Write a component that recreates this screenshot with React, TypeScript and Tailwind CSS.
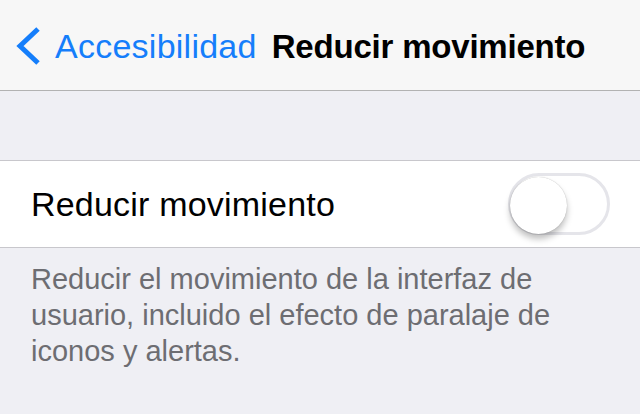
import React from "react";

export default function App() {
  const font = { fontFamily: '"Liberation Sans", Arial, sans-serif' };
  return (
    <div className="w-[640px] h-[414px] bg-[#efeff4] overflow-hidden" style={font}>
      <div className="h-[91px] bg-[#f7f7f7] border-b border-[#b2b2b2] flex items-center relative">
        <div className="flex items-center pl-[15px] pt-[2px]">
          <svg width="27" height="40" viewBox="0 0 27 40" className="mr-[13px]">
            <path d="M23 3 L5 20 L23 37" fill="none" stroke="#157efb" strokeWidth="5" strokeLinecap="butt" strokeLinejoin="miter" />
          </svg>
          <span className="text-[34px] text-[#157efb] leading-none tracking-[0.25px]">Accesibilidad</span>
        </div>
        <span className="ml-[15px] pt-[2px] text-[33px] font-bold text-black leading-none tracking-[-0.2px]">Reducir movimiento</span>
      </div>
      <div className="h-[69px]" />
      <div className="bg-white border-y border-[#c8c7cc] h-[88px] flex items-center justify-between pl-[31px] pr-[30px]">
        <span className="text-[34px] text-black leading-none tracking-[0.2px]">Reducir movimiento</span>
        <div className="w-[102px] h-[62px] rounded-full border-[3px] border-[#e5e5ea] relative">
          <div className="absolute left-[-1px] top-[1px] w-[57px] h-[57px] rounded-full bg-white shadow-[0_5px_6px_rgba(0,0,0,0.25),0_0_1px_rgba(0,0,0,0.3)]" />
        </div>
      </div>
      <div className="pl-[31px] pr-[30px] pt-[13px] text-[29px] leading-[36px] text-[#6d6d72]">
        Reducir el movimiento de la interfaz de usuario, incluido el efecto de paralaje de iconos y alertas.
      </div>
    </div>
  );
}
